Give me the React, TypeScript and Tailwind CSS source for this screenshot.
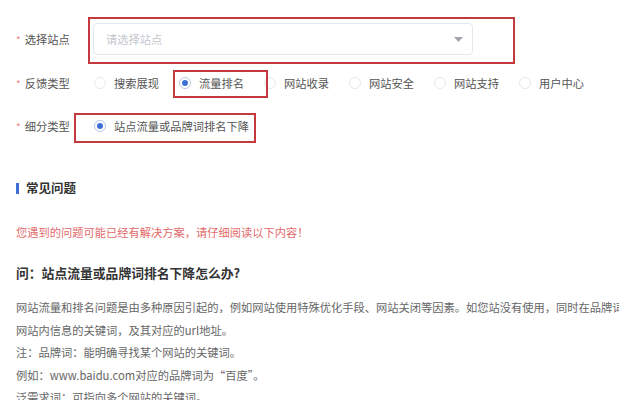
const font = { fontFamily: '"Noto Sans CJK SC", "Noto Sans", sans-serif' }

const feedbackTypes = ['搜索展现', '流量排名', '网站收录', '网站安全', '网站支持', '用户中心']

function Radio({ checked }: { checked?: boolean }) {
  return (
    <span
      className={
        'flex h-3 w-3 shrink-0 items-center justify-center rounded-full border bg-white ' +
        (checked ? 'border-[#b9c8e8]' : 'border-[#e6e8ec]')
      }
    >
      {checked && <span className="h-[6px] w-[6px] rounded-full bg-[#3d6fd6]" />}
    </span>
  )
}

function FieldLabel({ text }: { text: string }) {
  return (
    <div className="flex w-[78px] shrink-0 items-center text-[#555]">
      <span className="mr-[4px] text-[10px] text-[#f08a8a]">*</span>
      <span>{text}</span>
    </div>
  )
}

function Mark({ className }: { className: string }) {
  return <div className={'pointer-events-none absolute border-2 border-[#c4393e] ' + className} />
}

export default function App() {
  return (
    <div className="h-[400px] w-[619px] overflow-hidden bg-white text-[11.25px]" style={font}>
      <div className="pt-[23px]">
        <div className="relative flex h-8 items-center pl-4">
          <FieldLabel text="选择站点" />
          <div className="-ml-px flex h-8 w-[380px] items-center justify-between rounded-sm border border-[#e4e8ee] pl-3 pr-[9px]">
            <span className="text-[#c4c7ce]">请选择站点</span>
            <svg width="9" height="5" viewBox="0 0 9 5">
              <path d="M0 0h9L4.5 5z" fill="#a3a6ad" />
            </svg>
          </div>
          <Mark className="left-[88px] top-[-6px] h-[47px] w-[427px]" />
        </div>

        <div className="relative mt-[14px] flex h-7 items-center pl-4">
          <FieldLabel text="反馈类型" />
          {feedbackTypes.map((t, i) => (
            <div key={t} className="flex w-[85px] shrink-0 items-center">
              <Radio checked={i === 1} />
              <span className="ml-2 whitespace-nowrap text-[#555]">{t}</span>
            </div>
          ))}
          <Mark className="left-[173px] top-px h-7 w-[95px]" />
        </div>

        <div className="relative mt-[15px] flex h-7 items-center pl-4">
          <FieldLabel text="细分类型" />
          <div className="flex items-center">
            <Radio checked />
            <span className="ml-2 whitespace-nowrap text-[#555]">站点流量或品牌词排名下降</span>
          </div>
          <Mark className="left-[74px] top-px h-[30px] w-[182px]" />
        </div>
      </div>

      <div className="mt-[38px] flex h-5 items-center pl-4">
        <span className="h-[11px] w-[3px] bg-[#3d6fd6]" />
        <span className="ml-[7px] text-[12.5px] font-bold text-[#333]">常见问题</span>
      </div>

      <p className="mt-[24px] h-5 pl-4 leading-5 text-[#e26a6a]">
        您遇到的问题可能已经有解决方案，请仔细阅读以下内容！
      </p>

      <h2 className="mt-[21px] h-5 pl-4 text-[12.8px] font-bold leading-5 text-[#333]">
        问：站点流量或品牌词排名下降怎么办?
      </h2>

      <div className="mt-[13px] pl-4 leading-[22.5px] text-[#666]">
        <p className="whitespace-nowrap">
          网站流量和排名问题是由多种原因引起的，例如网站使用特殊优化手段、网站关闭等因素。如您站没有使用，同时在品牌词查询中
        </p>
        <p>网站内信息的关键词，及其对应的url地址。</p>
        <p>注：品牌词：能明确寻找某个网站的关键词。</p>
        <p>例如：www.baidu.com对应的品牌词为“百度”。</p>
        <p>泛需求词：可指向多个网站的关键词。</p>
      </div>
    </div>
  )
}
